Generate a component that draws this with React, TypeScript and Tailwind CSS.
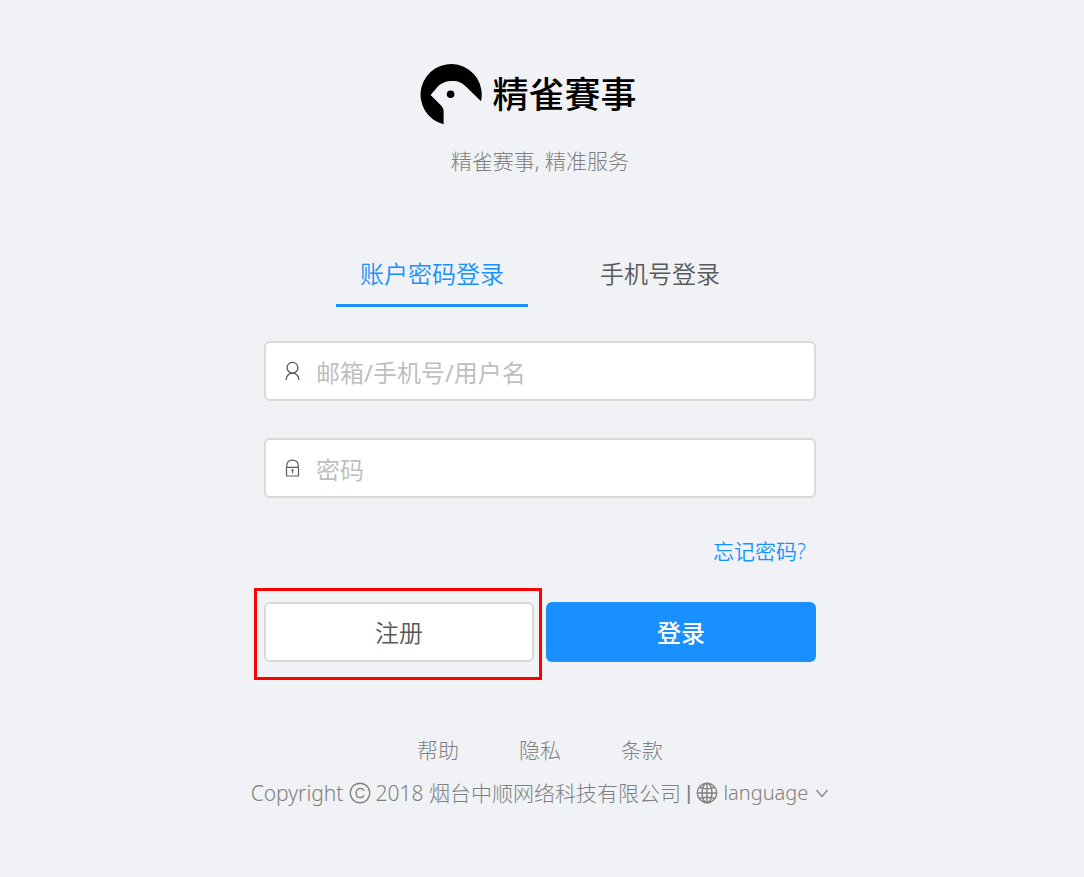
import React from "react";

function BirdLogo() {
  return (
    <svg viewBox="0 0 62 62" className="h-[62px] w-[62px] shrink-0" aria-hidden="true">
      <path
        d="M23.600 61.3A30.6 30.6 0 1 1 61 38.3L47.2 24.8C42 19.6 38.5 18 32.5 18C26.500 18 23.500 19.200 18.500 22.800L10.600 32L21.300 42.800C23 44.800 23.600 46.200 23.600 48.800Z"
        fill="#000"
      />
      <circle cx="30.600" cy="31.200" r="3.800" fill="#000" />
    </svg>
  );
}

function UserIcon() {
  return (
    <svg viewBox="0 0 16 20" className="h-5 w-4" fill="none" stroke="#5c5c5c" strokeWidth="1.300" aria-hidden="true">
      <ellipse cx="7.500" cy="6.700" rx="5.400" ry="5.400" />
      <path d="M1.200 19C1.200 14.800 3.800 12.100 7.500 12.100S13.800 14.800 13.800 19" />
    </svg>
  );
}

function LockIcon() {
  return (
    <svg viewBox="0 0 16 20" className="h-5 w-4" fill="none" stroke="#5c5c5c" strokeWidth="1.200" aria-hidden="true">
      <rect x="1.500" y="9.300" width="12" height="8.700" rx="0.600" />
      <path d="M1.700 9.300V8C1.700 4.300 4 2.100 7.500 2.100S13.300 4.300 13.300 8V9.300" />
      <path d="M7.500 11.500V15.300" />
      <path d="M6.300 12H8.700" />
    </svg>
  );
}

function CopyrightIcon() {
  return (
    <svg viewBox="0 0 22 22" className="h-[22px] w-[22px]" fill="none" stroke="currentColor" strokeWidth="1.400" role="img" aria-label="copyright">
      <circle cx="11" cy="11" r="9.800" />
      <path d="M14.900 8.800C14.300 7.300 13 6.400 11.200 6.400C8.600 6.400 7.100 8.200 7.100 11S8.600 15.600 11.200 15.600C13 15.600 14.300 14.700 14.900 13.200" />
    </svg>
  );
}

function GlobeIcon() {
  return (
    <svg viewBox="0 0 22 22" className="h-[22px] w-[22px]" fill="none" stroke="currentColor" strokeWidth="1.400" aria-hidden="true">
      <circle cx="11" cy="11" r="9.700" />
      <ellipse cx="11" cy="11" rx="5" ry="9.700" />
      <path d="M11 1.300V20.700M1.300 11H20.700M3.400 5.400C7.500 7.300 14.500 7.300 18.600 5.400M3.400 16.600C7.500 14.700 14.500 14.700 18.600 16.600" />
    </svg>
  );
}

type FieldProps = { id: string; type: string; label: string; icon: React.ReactNode };

function Field({ id, type, label, icon }: FieldProps) {
  return (
    <div className="flex h-[60px] items-center gap-[15px] rounded-md border-2 border-[#d9d9d9] bg-white px-[19px]">
      <label htmlFor={id} aria-label={label} className="shrink-0">
        {icon}
      </label>
      <input
        id={id}
        type={type}
        placeholder={label}
        className="h-full min-w-0 flex-1 bg-transparent pt-0.5 text-2xl font-normal text-[#595959] outline-none placeholder:text-[#bfbfbf]"
      />
    </div>
  );
}

const footerLinks = ["帮助", "隐私", "条款"];

export default function App() {
  return (
    <div className="flex min-h-screen flex-col items-center bg-[#f0f2f5] px-4 pt-[63px] pr-5 pb-16 font-['Noto_Sans','Noto_Sans_CJK_SC',sans-serif] font-light text-[#595959]">
      <header className="flex flex-col items-center">
        <h1 className="mr-[23px] flex items-center gap-[10px]">
          <BirdLogo />
          <span className="pb-1 font-['Noto_Sans_CJK_TC',sans-serif] text-4xl leading-[58px] font-medium text-black">精雀賽事</span>
        </h1>
        <p className="mt-5 text-[21px] leading-8 text-[#808080]">精雀赛事, 精准服务</p>
      </header>

      <main className="mt-16 w-full max-w-[552px]">
        <div role="tablist" className="flex justify-center gap-12 text-2xl font-[350]">
          <button type="button" role="tab" aria-selected="true" className="h-[66px] border-b-[3px] border-[#1890ff] px-6 pt-0.5 text-[#1890ff]">
            账户密码登录
          </button>
          <button type="button" role="tab" aria-selected="false" className="h-[66px] border-b-[3px] border-transparent px-6 pt-0.5">
            手机号登录
          </button>
        </div>

        <form className="mt-[34px]" onSubmit={(e) => e.preventDefault()}>
          <div className="flex flex-col gap-[37px]">
            <Field id="account" type="text" label="邮箱/手机号/用户名" icon={<UserIcon />} />
            <Field id="password" type="password" label="密码" icon={<LockIcon />} />
          </div>
          <div className="mt-[37px] flex justify-end pr-[10px] text-[21px] leading-8">
            <a href="#forgot" className="font-[350] text-[#1890ff]">忘记密码?</a>
          </div>
          <div className="mt-[35px] grid grid-cols-2 gap-3 text-2xl">
            <div className="relative">
              <button type="button" className="h-[60px] w-full rounded-md border-2 border-[#d9d9d9] bg-white pt-0.5 font-[350]">
                注册
              </button>
              <div className="pointer-events-none absolute -top-[14px] -right-2 -bottom-[18px] -left-[10px] border-[3px] border-[#ff0000]" />
            </div>
            <button type="submit" className="h-[60px] rounded-md bg-[#1890ff] pt-0.5 font-medium text-white">
              登录
            </button>
          </div>
        </form>
      </main>

      <footer className="mt-[72px] flex flex-col items-center text-[21px] leading-8 text-[#808080]">
        <nav className="flex gap-[60px]">
          {footerLinks.map((text) => (
            <a key={text} href="#info">{text}</a>
          ))}
        </nav>
        <div className="mt-[11px] flex flex-wrap items-center justify-center gap-[5px] whitespace-nowrap">
          <span>Copyright</span>
          <CopyrightIcon />
          <span>2018 烟台中顺网络科技有限公司</span>
          <span className="font-['Liberation_Sans',sans-serif]">|</span>
          <button type="button" className="flex items-center gap-[5px]">
            <GlobeIcon />
            <span className="text-xl leading-8">language</span>
            <svg viewBox="0 0 14 14" className="ml-0.5 h-[14px] w-[14px]" fill="none" stroke="currentColor" strokeWidth="1.200" aria-hidden="true">
              <path d="M1.500 4L7 10.500L12.500 4" />
            </svg>
          </button>
        </div>
      </footer>
    </div>
  );
}
